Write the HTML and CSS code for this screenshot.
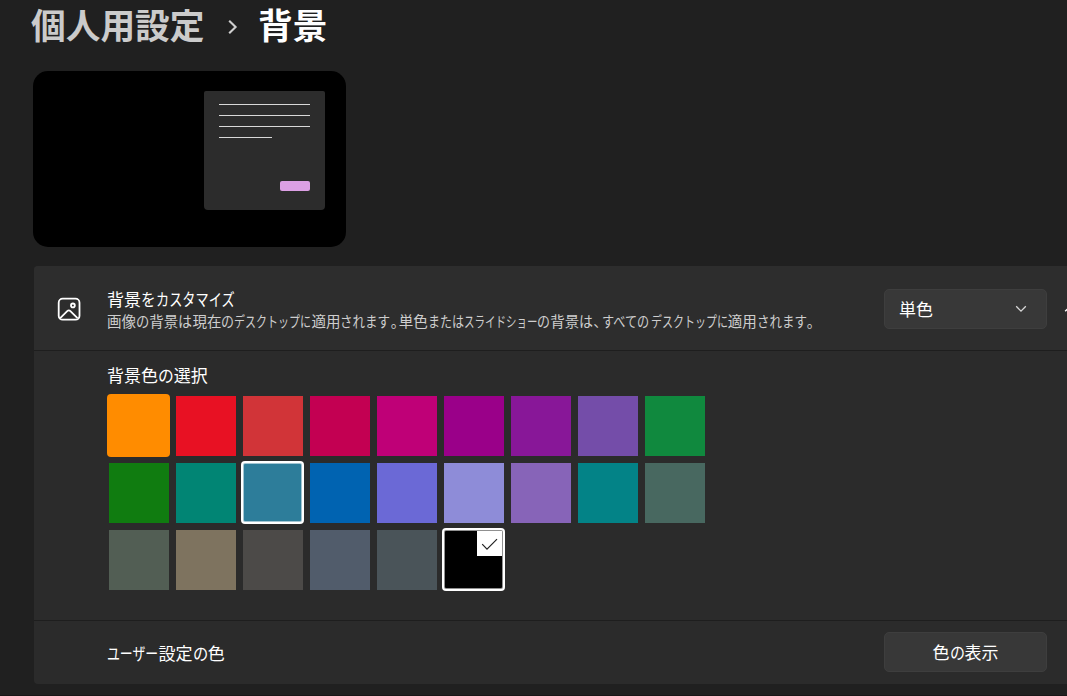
FILE: index.html
```
<!DOCTYPE html>
<html lang="ja">
<head>
<meta charset="utf-8">
<title>個人用設定 › 背景</title>
<link rel="stylesheet" href="styles.css">
</head>
<body>
<main class="page">
  <h1 class="crumbs">
    <span class="crumb-parent">個人用設定</span>
    <svg class="crumb-arrow" width="12" height="18" viewBox="0 0 12 18"><path d="M2.2 2.7 8.6 9 2.2 15.3"/></svg>
    <span class="crumb-current">背景</span>
  </h1>

  <div class="preview">
    <div class="window">
      <i class="line"></i><i class="line"></i><i class="line"></i><i class="line short"></i>
      <i class="accent"></i>
    </div>
  </div>

  <section class="card">
    <div class="row customize">
      <svg class="picture-icon" width="24" height="24" viewBox="0 0 24 24"><rect x="1.7" y="1.7" width="20.8" height="21" rx="4"/><circle cx="15.9" cy="8.4" r="1.9"/><path d="M3.2 21.2 10.2 14.1Q11.8 12.7 13.4 14.1L20.5 21.2"/></svg>
      <div class="labels">
        <div class="text title">背景<span class="kana" style="--n:1;--w:14.5">を</span><span class="kana" style="--n:6;--w:79">カスタマイズ</span></div>
        <div class="text desc">画像<span class="kana" style="--n:1;--w:13.3">の</span>背景<span class="kana" style="--n:1;--w:14">は</span>現在<span class="kana" style="--n:1;--w:13">の</span><span class="kana" style="--n:7;--w:77">デスクトップに</span>適用<span class="kana" style="--n:4;--w:50.2">されます</span><span class="mark">。</span>単色<span class="kana" style="--n:3;--w:36">または</span><span class="kana" style="--n:7;--w:73.5">スライドショー</span><span class="kana" style="--n:1;--w:13">の</span>背景<span class="kana" style="--n:1;--w:14">は</span><span class="mark wide">、</span><span class="kana" style="--n:4;--w:48.5">すべての</span><span class="kana" style="--n:7;--w:77">デスクトップに</span>適用<span class="kana" style="--n:4;--w:50">されます</span><span class="mark">。</span></div>
      </div>
      <button class="control select"><span class="text">単色</span><svg width="12" height="8" viewBox="0 0 12 8"><path d="M1.2 1.3 6 6.1 10.8 1.3"/></svg></button>
      <svg class="collapse" width="12" height="8" viewBox="0 0 12 8"><path d="M1.2 6.3 6 1.5 10.8 6.3"/></svg>
    </div>

    <div class="row picker">
      <div class="text">背景色<span class="kana" style="--n:1;--w:15.8">の</span>選択</div>
      <div class="swatches">
        <i class="swatch orange"></i><i class="swatch red"></i><i class="swatch brick"></i><i class="swatch rose"></i><i class="swatch magenta"></i><i class="swatch plum"></i><i class="swatch violet"></i><i class="swatch iris"></i><i class="swatch emerald"></i>
        <i class="swatch green"></i><i class="swatch jade"></i><i class="swatch steel ring"></i><i class="swatch blue"></i><i class="swatch indigo"></i><i class="swatch lavender"></i><i class="swatch orchid"></i><i class="swatch teal"></i><i class="swatch moss"></i>
        <i class="swatch sage"></i><i class="swatch camel"></i><i class="swatch stone"></i><i class="swatch slate"></i><i class="swatch storm"></i><i class="swatch black ring"><span class="check"><svg width="17" height="13" viewBox="0 0 17 13"><path d="M1.2 6.2 6 11.2 16 1.2"/></svg></span></i>
      </div>
    </div>

    <div class="row custom">
      <div class="text"><span class="kana" style="--n:4;--w:51.5">ユーザー</span>設定<span class="kana" style="--n:1;--w:15.3">の</span>色</div>
      <button class="control"><span class="text">色<span class="kana" style="--n:1;--w:15">の</span>表示</span></button>
    </div>
  </section>
</main>
</body>
</html>
```
FILE: styles.css
```
* { box-sizing: border-box; }

body {
  margin: 0;
  height: 696px;
  overflow: hidden;
  background: #202020;
  border-bottom: 1px solid #191617;
  color: #fff;
  font-family: "Noto Sans CJK JP", sans-serif;
}

svg { display: block; fill: none; stroke: currentColor; flex: none; }

.page { padding-left: 33px; }

/* Breadcrumb heading */
.crumbs {
  display: flex;
  align-items: center;
  height: 52px;
  margin: 0 0 19px -2px;
  font-size: 34.7px;
  line-height: 48px;
  font-weight: 700;
  white-space: nowrap;
}
.crumb-parent, .crumb-current { height: 52px; }
.crumb-parent { width: 174px; color: #cbcbcb; }
.crumb-arrow { margin: 2px 19px 0 22px; color: #cfcfcf; stroke-width: 2.1; }

/* Desktop preview */
.preview {
  display: flex;
  justify-content: flex-end;
  align-items: flex-start;
  width: 313px;
  height: 176px;
  padding: 20px 21px;
  border-radius: 15px;
  background: #000;
}
.window {
  display: flex;
  flex-direction: column;
  gap: 10px;
  width: 121px;
  height: 119px;
  padding: 13px 15px 19px;
  border-radius: 2px 2px 4px 4px;
  background: #2c2c2c;
}
.line { height: 1px; background: #d8d8d8; }
.line.short { width: 53px; }
.accent {
  width: 30px;
  height: 10px;
  margin-top: auto;
  align-self: flex-end;
  border-radius: 2px;
  background: #dca0e4;
}

/* Text with narrow kana */
.text { --fs: 17; font-size: calc(var(--fs) * 1px); line-height: 24px; white-space: nowrap; }
.kana {
  display: inline-block;
  width: calc(var(--w) * 1px);
  transform: scaleX(calc(var(--w) / (var(--n) * var(--fs))));
  transform-origin: left;
}
.mark { display: inline-block; width: 8px; font-feature-settings: "halt"; }
.mark.wide { width: 9px; }

/* Settings card */
.card {
  width: 1060px;
  margin: 19px 0 0 1px;
  border-radius: 4px;
  background: #2b2b2b;
}
.row { display: flex; }
.row + .row { border-top: 1px solid #1e1e1e; }

.customize { height: 84px; align-items: center; padding: 2px 0 0 23px; background: #2d2d2d; border-radius: 4px 0 0 0; }
.picture-icon { stroke-width: 1.8; }
.labels { width: 777px; margin: -1px 0 0 26px; }
.title { line-height: 23px; }
.desc { --fs: 14.53; line-height: 21px; color: #cecece; }

.control {
  display: flex;
  align-items: center;
  justify-content: center;
  width: 163px;
  height: 40px;
  padding: 0;
  border: 1px solid #3e3e3e;
  border-radius: 5px;
  background: #383838;
  color: #fff;
  font-family: inherit;
}
.select { justify-content: space-between; padding: 0 19px 0 14px; }
.select svg { color: #d8d8d8; stroke-width: 1.3; }
.collapse { margin-left: 17px; stroke-width: 1.5; }

.picker { flex-direction: column; height: 270px; padding: 12px 0 0 73px; }
.swatches {
  display: grid;
  grid-template-columns: repeat(9, 60px);
  grid-auto-rows: 60px;
  gap: 7px;
  margin: 9px 0 0 2px;
}
.orange { width: 59px; height: 59px; background: #ff8c00; box-shadow: 0 0 0 2px #ff8c00; border-radius: 2px; }
.red { background: #e81123; }
.brick { background: #d13438; }
.rose { background: #c30052; }
.magenta { background: #bf0077; }
.plum { background: #9a0089; }
.violet { background: #881798; }
.iris { background: #744da9; }
.emerald { background: #10893e; }
.green { background: #107c10; }
.jade { background: #018574; }
.steel { background: #2d7d9a; }
.blue { background: #0063b1; }
.indigo { background: #6b69d6; }
.lavender { background: #8e8cd8; }
.orchid { background: #8764b8; }
.teal { background: #038387; }
.moss { background: #486860; }
.sage { background: #525e54; }
.camel { background: #7e735f; }
.stone { background: #4c4a48; }
.slate { background: #515c6b; }
.storm { background: #4a5459; }
.black { background: #000; }
.ring { width: 59px; height: 59px; border: 1px solid #ffffff90; border-radius: 2px; box-shadow: 0 0 0 2px #fff; }
.check {
  display: grid;
  place-items: center;
  width: 25px;
  height: 25px;
  margin-left: auto;
  background: #fff;
  color: #222;
}
.check svg { stroke-width: 1.2; margin-top: 2px; }

.custom { height: 64px; justify-content: space-between; align-items: center; padding: 0 47px 2px 73px; }
.custom > .text { padding-top: 3px; }
```
